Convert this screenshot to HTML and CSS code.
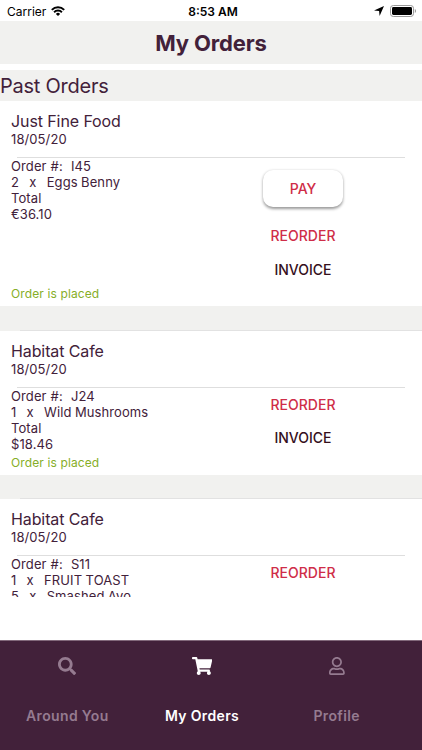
FILE: index.html
```html
<!DOCTYPE html>
<html lang="en">
<head>
    <meta charset="UTF-8">
    <meta name="viewport" content="width=device-width, initial-scale=1.0">
    <title>My Orders</title>
    <link rel="stylesheet" href="styles.css">
</head>
<body>
    <!-- Status bar -->
    <div class="status-bar">
        <div class="status-left">
            <span>Carrier</span>
            <svg class="wifi" viewBox="0 0 14 10" fill="none" stroke="#000" stroke-width="2">
                <path d="M0.8 3.9a8.8 8.8 0 0 1 12.4 0"/>
                <path d="M3.1 6.2a5.5 5.5 0 0 1 7.8 0"/>
                <path d="M7 10L4.9 7.9a3 3 0 0 1 4.2 0z" fill="#000" stroke="none"/>
            </svg>
        </div>
        <span class="time">8:53 AM</span>
        <div class="status-right">
            <svg class="location" viewBox="0 0 10 10"><path d="M10 0L5.6 10 5.1 5 0 4.5z"/></svg>
            <svg class="battery" viewBox="0 0 27 12">
                <rect x="0.5" y="0.5" width="23" height="11" rx="2.8" fill="none" stroke="#999"/>
                <rect x="2" y="2" width="20" height="8" rx="1.4"/>
                <path d="M24.8 4v4c1.7-.7 1.7-3.3 0-4z" fill="#999"/>
            </svg>
        </div>
    </div>

    <header>
        <h1>My Orders</h1>
    </header>

    <!-- Orders -->
    <main>
        <h2>Past Orders</h2>
        <div class="orders">
            <section class="order">
                <div class="order-head">
                    <h3>Just Fine Food</h3>
                    <p>18/05/20</p>
                </div>
                <div class="order-body">
                    <div class="details">
                        <p>Order #:  I45</p>
                        <p>2   x   Eggs Benny</p>
                        <p>Total</p>
                        <p>€36.10</p>
                    </div>
                    <div class="actions">
                        <button class="btn pay">PAY</button>
                        <button class="btn">REORDER</button>
                        <button class="btn invoice">INVOICE</button>
                    </div>
                </div>
                <p class="order-status">Order is placed</p>
            </section>

            <section class="order">
                <div class="order-head">
                    <h3>Habitat Cafe</h3>
                    <p>18/05/20</p>
                </div>
                <div class="order-body">
                    <div class="details">
                        <p>Order #:  J24</p>
                        <p>1   x   Wild Mushrooms</p>
                        <p>Total</p>
                        <p>$18.46</p>
                    </div>
                    <div class="actions">
                        <button class="btn">REORDER</button>
                        <button class="btn invoice">INVOICE</button>
                    </div>
                </div>
                <p class="order-status">Order is placed</p>
            </section>

            <section class="order">
                <div class="order-head">
                    <h3>Habitat Cafe</h3>
                    <p>18/05/20</p>
                </div>
                <div class="order-body">
                    <div class="details">
                        <p>Order #:  S11</p>
                        <p>1   x   FRUIT TOAST</p>
                        <p>5   x   Smashed Avo</p>
                    </div>
                    <div class="actions">
                        <button class="btn">REORDER</button>
                    </div>
                </div>
            </section>
        </div>
    </main>

    <!-- Tabs -->
    <nav>
        <a href="#around">
            <svg viewBox="0 0 512 512"><path d="M505 442.7L405.300 343c-4.500-4.500-10.600-7-17-7H372c27.600-35.300 44-79.700 44-128C416 93.100 322.900 0 208 0S0 93.100 0 208s93.100 208 208 208c48.300 0 92.700-16.400 128-44v16.300c0 6.400 2.500 12.500 7 17l99.700 99.700c9.400 9.400 24.600 9.400 33.900 0l28.300-28.300c9.400-9.400 9.400-24.600.1-34zM208 336c-70.700 0-128-57.200-128-128 0-70.700 57.200-128 128-128 70.700 0 128 57.200 128 128 0 70.700-57.200 128-128 128z"/></svg>
            <span>Around You</span>
        </a>
        <a href="#orders" class="active">
            <svg class="cart" viewBox="0 0 576 512"><path d="M528.120 301.319l47.273-208C578.806 78.301 567.391 64 551.990 64H159.208l-9.166-44.810C147.758 8.021 137.930 0 126.529 0H24C10.745 0 0 10.745 0 24v16c0 13.255 10.745 24 24 24h69.883l70.248 343.435C147.325 417.100 136 435.222 136 456c0 30.928 25.072 56 56 56s56-25.072 56-56c0-15.674-6.447-29.835-16.824-40h209.647C430.447 426.165 424 440.326 424 456c0 30.928 25.072 56 56 56s56-25.072 56-56c0-22.172-12.888-41.332-31.579-50.405l5.517-24.276c3.413-15.018-8.002-29.319-23.403-29.319H218.117l-6.545-32h293.145c11.206 0 20.920-7.754 23.403-18.681z"/></svg>
            <span>My Orders</span>
        </a>
        <a href="#profile">
            <svg viewBox="0 0 448 512"><path d="M313.600 304c-28.700 0-42.500 16-89.600 16-47.100 0-60.800-16-89.600-16C60.200 304 0 364.200 0 438.400V464c0 26.500 21.500 48 48 48h352c26.500 0 48-21.500 48-48v-25.600c0-74.200-60.200-134.400-134.400-134.400zM400 464H48v-25.600c0-47.600 38.800-86.400 86.400-86.400 14.600 0 38.300 16 89.600 16 51.700 0 74.900-16 89.600-16 47.600 0 86.400 38.800 86.400 86.400V464zM224 288c79.500 0 144-64.500 144-144S303.500 0 224 0 80 64.500 80 144s64.500 144 144 144zm0-240c52.900 0 96 43.100 96 96s-43.100 96-96 96-96-43.100-96-96 43.100-96 96-96z"/></svg>
            <span>Profile</span>
        </a>
    </nav>
</body>
</html>
```
FILE: styles.css
```css
/* General Styles */
* {
    box-sizing: border-box;
}

body {
    display: flex;
    flex-direction: column;
    height: 100vh;
    margin: 0;
    overflow: hidden;
    font-family: Inter, "Liberation Sans", sans-serif;
    background-color: #fff;
    color: #42213a;
}

h1, h2, h3, p {
    margin: 0;
    font-weight: 400;
}

/* Status bar */
.status-bar {
    display: grid;
    grid-template-columns: 1fr auto 1fr;
    align-items: center;
    height: 21px;
    padding: 1px 5px 0 7px;
    font-size: 12px;
    color: #000;
}

.status-left,
.status-right {
    display: flex;
    align-items: center;
    gap: 6px;
}

.status-left {
    gap: 5px;
}

.status-right {
    justify-content: flex-end;
}

.time {
    font-weight: 600;
    padding-left: 2px;
}

.wifi {
    width: 14px;
    height: 10px;
}

.location {
    width: 10px;
    height: 10px;
}

.battery {
    width: 27px;
    height: 12px;
}

/* Header */
header {
    height: 43px;
    background-color: #f1f1ef;
    text-align: center;
}

h1 {
    font-size: 22px;
    font-weight: 700;
    line-height: 44px;
    letter-spacing: -0.15px;
}

/* Orders */
main {
    height: 533px;
    padding-top: 6px;
    overflow: hidden;
}

h2 {
    height: 31px;
    font-size: 20px;
    line-height: 32px;
    letter-spacing: -0.25px;
    background-color: #f1f1ef;
}

.orders {
    display: flex;
    flex-direction: column;
}

.order {
    padding-bottom: 4px;
}

.order + .order::before {
    content: "";
    display: block;
    height: 24.5px;
    background: linear-gradient(#e2e2e2, #e2e2e2) 20px 100% / 100% 1px no-repeat #f1f1ef;
}

.order-head {
    height: 57px;
    padding: 9px 0 0 11px;
    background: linear-gradient(#dedede, #dedede) 17px 100% / 388px 1px no-repeat;
}

.order-head h3 {
    font-size: 16px;
    line-height: 22px;
    letter-spacing: -0.1px;
}

.order-head p {
    font-size: 13px;
    line-height: 14px;
    letter-spacing: 0.1px;
}

.order-body {
    display: flex;
    justify-content: space-between;
    padding: 0 59px 0 11px;
}

.details {
    font-size: 13px;
    line-height: 16px;
    letter-spacing: 0.1px;
    word-spacing: -0.35px;
}

.details p {
    white-space: pre;
}

.details p:first-child {
    word-spacing: 0.3px;
}

.actions {
    display: flex;
    flex-direction: column;
    align-items: center;
    width: 120px;
}

.btn {
    height: 33.5px;
    padding: 0;
    border: 0;
    background: none;
    font: 500 14px/33px Inter, "Liberation Sans", sans-serif;
    color: #cf2d48;
}

.pay {
    width: 80px;
    height: 37px;
    margin: 12px 0;
    border-radius: 10px;
    background-color: #fff;
    box-shadow: 0 1.5px 3px rgba(0, 0, 0, 0.4);
}

.invoice {
    color: #350f1c;
}

.order-status {
    padding-left: 11px;
    font-size: 12px;
    line-height: 16px;
    letter-spacing: 0.12px;
    color: #86ae27;
}

/* Tabs */
nav {
    display: flex;
    height: 110px;
    margin-top: auto;
    padding-right: 18px;
    border-top: 1px solid #82697b;
    background-color: #42213a;
}

nav a {
    flex: 1;
    display: flex;
    flex-direction: column;
    align-items: center;
    padding-top: 16px;
    color: #957b90;
    font-size: 14px;
    font-weight: 600;
    line-height: 18px;
    letter-spacing: 0.35px;
    text-decoration: none;
}

nav svg {
    height: 18px;
    margin-bottom: 32px;
    fill: currentColor;
}

nav .active {
    color: #fff;
}
```
